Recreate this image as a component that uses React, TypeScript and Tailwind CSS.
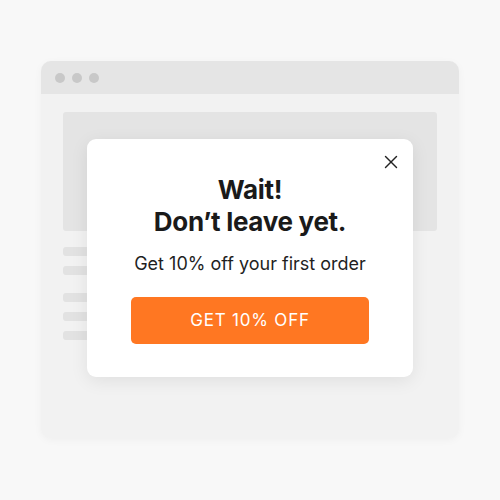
import { X } from "lucide-react";

export default function App() {
  const lines = ["mt-4", "mt-[10px]", "mt-[18px]", "mt-[10px]", "mt-[10px]"];

  return (
    <div className="flex h-[500px] w-[500px] items-start justify-center bg-[#f8f8f8] pt-[61px] font-['Inter',sans-serif]">
      <div className="relative h-[377px] w-[418px] overflow-hidden rounded-[10px] bg-[#f2f2f2] shadow-[0_2px_8px_rgba(0,0,0,0.04)]">
        <div className="flex h-[33px] items-center gap-[7px] bg-[#e5e5e5] pl-[14px]">
          <span className="h-[10px] w-[10px] rounded-full bg-[#c8c8c8]" />
          <span className="h-[10px] w-[10px] rounded-full bg-[#c8c8c8]" />
          <span className="h-[10px] w-[10px] rounded-full bg-[#c8c8c8]" />
        </div>
        <div className="px-[22px] pt-[18px]">
          <div className="h-[119px] rounded-[3px] bg-[#e4e4e4]" />
          {lines.map((m, i) => (
            <div key={i} className={`${m} h-[9px] w-[120px] rounded-[3px] bg-[#e2e2e2]`} />
          ))}
        </div>

        <div className="absolute left-[46px] top-[78px] flex h-[238px] w-[326px] flex-col items-center rounded-[9px] bg-white pt-[35px] shadow-[0_4px_18px_rgba(0,0,0,0.08)]">
          <button className="absolute right-[11px] top-[12px] text-[#222]">
            <X className="h-[22px] w-[22px]" strokeWidth={1.5} />
          </button>
          <h1 className="text-center text-[26px] font-bold leading-[32px] tracking-[-0.3px] text-[#1a1a1a]">
            Wait!
            <br />
            Don’t leave yet.
          </h1>
          <p className="mt-[13px] text-[18px] leading-[25px] text-[#1f1f1f]">Get 10% off your first order</p>
          <button className="mt-[21px] h-[47px] w-[238px] rounded-[5px] bg-[#ff7722] text-[17px] tracking-[0.8px] text-white">
            GET 10% OFF
          </button>
        </div>
      </div>
    </div>
  );
}
